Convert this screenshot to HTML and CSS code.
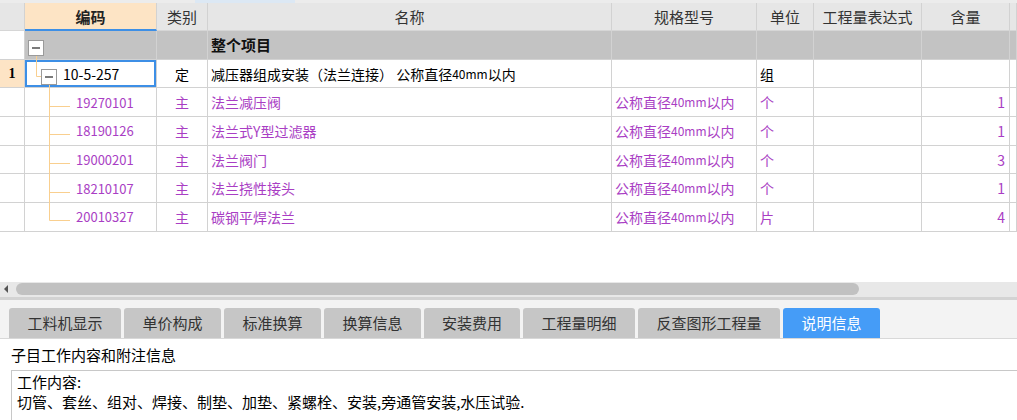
FILE: index.html
```html
<!DOCTYPE html>
<html lang="zh-CN">
<head>
<meta charset="utf-8">
<title>子目</title>
<link rel="stylesheet" href="styles.css">
</head>
<body>
<div class="topstrip"><span class="topstrip-hl"></span></div>
<div class="table">
  <div class="row head">
    <div class="c rn"></div>
    <div class="c code-h">编码</div>
    <div class="c ctr">类别</div>
    <div class="c ctr">名称</div>
    <div class="c ctr">规格型号</div>
    <div class="c ctr">单位</div>
    <div class="c ctr">工程量表达式</div>
    <div class="c ctr">含量</div>
    <div class="c"></div>
  </div>
  <div class="row project">
    <div class="c rn"></div>
    <div class="c"></div>
    <div class="c"></div>
    <div class="c bold">整个项目</div>
    <div class="c"></div>
    <div class="c"></div>
    <div class="c"></div>
    <div class="c"></div>
    <div class="c"></div>
  </div>
  <div class="row">
    <div class="c rn rn-sel">1</div>
    <div class="c code sel lvl1">10-5-257</div>
    <div class="c ctr">定</div>
    <div class="c">减压器组成安装（法兰连接）&nbsp;公称直径<span class="sm">40mm</span>以内</div>
    <div class="c"></div>
    <div class="c">组</div>
    <div class="c"></div>
    <div class="c"></div>
    <div class="c"></div>
  </div>
  <div class="row sub">
    <div class="c rn"></div>
    <div class="c code lvl2">19270101</div>
    <div class="c ctr">主</div>
    <div class="c">法兰减压阀</div>
    <div class="c">公称直径<span class="sm">40mm</span>以内</div>
    <div class="c">个</div>
    <div class="c"></div>
    <div class="c num">1</div>
    <div class="c"></div>
  </div>
  <div class="row sub">
    <div class="c rn"></div>
    <div class="c code lvl2">18190126</div>
    <div class="c ctr">主</div>
    <div class="c">法兰式Y型过滤器</div>
    <div class="c">公称直径<span class="sm">40mm</span>以内</div>
    <div class="c">个</div>
    <div class="c"></div>
    <div class="c num">1</div>
    <div class="c"></div>
  </div>
  <div class="row sub">
    <div class="c rn"></div>
    <div class="c code lvl2">19000201</div>
    <div class="c ctr">主</div>
    <div class="c">法兰阀门</div>
    <div class="c">公称直径<span class="sm">40mm</span>以内</div>
    <div class="c">个</div>
    <div class="c"></div>
    <div class="c num">3</div>
    <div class="c"></div>
  </div>
  <div class="row sub">
    <div class="c rn"></div>
    <div class="c code lvl2">18210107</div>
    <div class="c ctr">主</div>
    <div class="c">法兰挠性接头</div>
    <div class="c">公称直径<span class="sm">40mm</span>以内</div>
    <div class="c">个</div>
    <div class="c"></div>
    <div class="c num">1</div>
    <div class="c"></div>
  </div>
  <div class="row sub">
    <div class="c rn"></div>
    <div class="c code lvl2">20010327</div>
    <div class="c ctr">主</div>
    <div class="c">碳钢平焊法兰</div>
    <div class="c">公称直径<span class="sm">40mm</span>以内</div>
    <div class="c">片</div>
    <div class="c"></div>
    <div class="c num">4</div>
    <div class="c"></div>
  </div>
  <svg class="tree" width="132" height="201" viewBox="0 0 132 201">
    <g stroke="#f9cf8f" stroke-width="1" fill="none">
      <line x1="11.5" y1="22" x2="11.5" y2="42.5"/>
      <line x1="11.5" y1="42.5" x2="16" y2="42.5"/>
      <line x1="24.5" y1="50" x2="24.5" y2="186.5"/>
      <line x1="24.5" y1="72.5" x2="45" y2="72.5"/>
      <line x1="24.5" y1="100.5" x2="45" y2="100.5"/>
      <line x1="24.5" y1="129.5" x2="45" y2="129.5"/>
      <line x1="24.5" y1="158.5" x2="45" y2="158.5"/>
      <line x1="24.5" y1="186.5" x2="45" y2="186.5"/>
    </g>
    <g stroke="#9a9a9a" stroke-width="1" fill="#fff">
      <rect x="3.5" y="6.5" width="15" height="15"/>
      <rect x="16.5" y="35.5" width="15" height="15"/>
    </g>
    <g stroke="#222" stroke-width="1.2">
      <line x1="7" y1="14" x2="15" y2="14"/>
      <line x1="20" y1="43" x2="28" y2="43"/>
    </g>
  </svg>
</div>
<div class="gap"></div>
<div class="hscroll">
  <span class="arrow"></span>
  <span class="thumb"></span>
</div>
<div class="tabs">
  <div class="tab w112">工料机显示</div>
  <div class="tab w97">单价构成</div>
  <div class="tab w97">标准换算</div>
  <div class="tab w97">换算信息</div>
  <div class="tab w96">安装费用</div>
  <div class="tab w112">工程量明细</div>
  <div class="tab w142">反查图形工程量</div>
  <div class="tab w97 active">说明信息</div>
</div>
<div class="panel">
  <div class="panel-label">子目工作内容和附注信息</div>
  <div class="panel-box">
    <div class="ln">工作内容:</div>
    <div class="ln">切管、套丝、组对、焊接、制垫、加垫、紧螺栓、安装,旁通管安装,水压试验.</div>
  </div>
</div>
</body>
</html>
```

FILE: styles.css
```css
html, body {
  margin: 0;
  padding: 0;
  background: #fff;
  width: 1017px;
  height: 420px;
  overflow: hidden;
  font-family: "Noto Sans CJK SC", "Noto Sans", sans-serif;
  color: #000;
}

.topstrip {
  height: 3px;
  background: #ececec;
  display: flex;
}
.topstrip-hl {
  margin-left: 195px;
  width: 100px;
  background: #dce8f4;
}

.table {
  position: relative;
  width: 1017px;
}

.row {
  display: grid;
  grid-template-columns: 25px 132px 51px 404px 145px 57px 108px 88px 7px;
  height: 28.7px;
}
.row.head {
  height: 28px;
  background: #e6e6e6;
}

.c {
  box-sizing: border-box;
  border-right: 1px solid #d2d2d2;
  border-bottom: 1px solid #d2d2d2;
  display: flex;
  align-items: center;
  padding: 0 3px;
  white-space: nowrap;
  overflow: hidden;
  font-size: 14px;
  line-height: 1;
}

.sm { font-size: 12px; }

.head .c {
  font-size: 15px;
  color: #333;
  border-bottom-color: #d6d6d6;
}
.head .code-h {
  background: #fde4c5;
  justify-content: center;
  font-weight: bold;
  color: #222;
  border-bottom: 2px solid #3d8fe6;
}

.ctr { justify-content: center; }
.num { justify-content: flex-end; padding-right: 4px; }
.bold { font-weight: bold; font-size: 15px; color: #111; }

.rn {
  background: #fff;
  justify-content: center;
}
.head .rn { background: #e6e6e6; }
.rn-sel {
  background: #fde4c5;
  font-family: "Liberation Serif", serif;
  font-weight: bold;
  font-size: 14px;
}

.project .c { background: #c3c3c3; border-bottom-color: #d2d2d2; }
.project .rn { background: #fff; }

.code.lvl1 { padding-left: 38px; }
.code.lvl2 { padding-left: 51px; font-size: 13px; }
.sel { box-shadow: inset 0 0 0 2px #3d8fe6; }

.sub .c { color: #a93ec4; }

.tree {
  position: absolute;
  left: 25px;
  top: 31px;
}

.gap { height: 50px; }

.hscroll {
  height: 15px;
  background: #e8e8e8;
  border-bottom: 3px solid #d3d3d3;
  display: flex;
  align-items: center;
}
.arrow {
  width: 0;
  height: 0;
  margin-left: 4px;
  border-top: 4px solid transparent;
  border-bottom: 4px solid transparent;
  border-right: 4px solid #555;
}
.thumb {
  margin-left: 8px;
  width: 843px;
  height: 12px;
  border-radius: 6px;
  background: #c1c1c1;
}

.tabs {
  height: 38px;
  background: #f3f3f3;
  border-bottom: 1px solid #d8d8d8;
  display: flex;
  align-items: flex-end;
  gap: 3px;
  padding-left: 9px;
}
.tab {
  height: 30px;
  background: #c6c6c6;
  border-radius: 3px 3px 0 0;
  display: flex;
  align-items: center;
  justify-content: center;
  font-size: 15px;
  color: #333;
}
.tab.active { background: #459cf7; color: #fff; }
.w96 { width: 96px; }
.w97 { width: 97px; }
.w112 { width: 112px; }
.w142 { width: 142px; }

.panel-label {
  height: 31px;
  line-height: 31px;
  padding-left: 11px;
  font-size: 15px;
}
.panel-box {
  margin-left: 11px;
  border: 1px solid #c8c8c8;
  border-right: none;
  height: 60px;
  padding: 1px 0 0 5px;
  font-size: 15px;
}
.ln {
  height: 20px;
  line-height: 20px;
}
```
